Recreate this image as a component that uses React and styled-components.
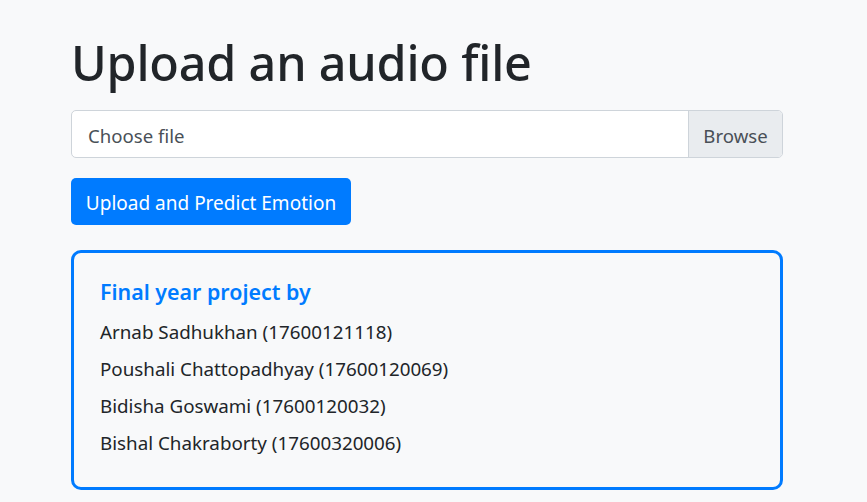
import React from 'react';
import styled, { createGlobalStyle } from 'styled-components';

const GlobalStyle = createGlobalStyle`
  html, body {
    margin: 0;
    padding: 0;
    background: #f8f9fa;
  }
  body {
    font-family: "Noto Sans", "Open Sans", sans-serif;
    color: #212529;
  }
`;

const Page = styled.div`
  width: 712px;
  margin-left: 71px;
  padding-top: 27px;
  display: flex;
  flex-direction: column;
`;

const Title = styled.h1`
  margin: 0 0 13px;
  font-size: 48.5px;
  font-weight: 500;
  line-height: 70px;
  color: #212529;
  letter-spacing: -0.2px;
`;

const FileField = styled.div`
  display: flex;
  height: 48px;
  box-sizing: border-box;
  border: 1px solid #ced4da;
  border-radius: 5px;
  background: #fff;
  overflow: hidden;
  font-size: 18.6px;
  color: #495057;
`;

const FileLabel = styled.div`
  flex: 1;
  display: flex;
  align-items: center;
  padding: 2px 0 0 16px;
`;

const BrowseButton = styled.div`
  width: 93px;
  display: flex;
  align-items: center;
  justify-content: center;
  padding-top: 2px;
  background: #e9ecef;
  border-left: 1px solid #ced4da;
`;

const SubmitButton = styled.button`
  align-self: flex-start;
  margin-top: 20px;
  width: 280px;
  height: 47px;
  padding: 3px 0 0;
  border: none;
  border-radius: 5px;
  background: #007bff;
  color: #fff;
  font-family: inherit;
  font-size: 19px;
  cursor: pointer;
`;

const Card = styled.div`
  margin-top: 25px;
  height: 240px;
  box-sizing: border-box;
  border: 3px solid #007bff;
  border-radius: 10px;
  padding: 22px 26px;
`;

const CardTitle = styled.h4`
  margin: 0 0 5px;
  font-size: 21.4px;
  font-weight: 600;
  line-height: 34px;
  color: #007bff;
`;

const Member = styled.p`
  margin: 0;
  font-size: 18.8px;
  line-height: 37px;
  color: #212529;
`;

const members = [
  'Arnab Sadhukhan (17600121118)',
  'Poushali Chattopadhyay (17600120069)',
  'Bidisha Goswami (17600120032)',
  'Bishal Chakraborty (17600320006)',
];

const App = () => (
  <>
    <GlobalStyle />
    <Page>
      <Title>Upload an audio file</Title>
      <FileField>
        <FileLabel>Choose file</FileLabel>
        <BrowseButton>Browse</BrowseButton>
      </FileField>
      <SubmitButton type="button">Upload and Predict Emotion</SubmitButton>
      <Card>
        <CardTitle>Final year project by</CardTitle>
        {members.map(m => (
          <Member key={m}>{m}</Member>
        ))}
      </Card>
    </Page>
  </>
);

export default App;
